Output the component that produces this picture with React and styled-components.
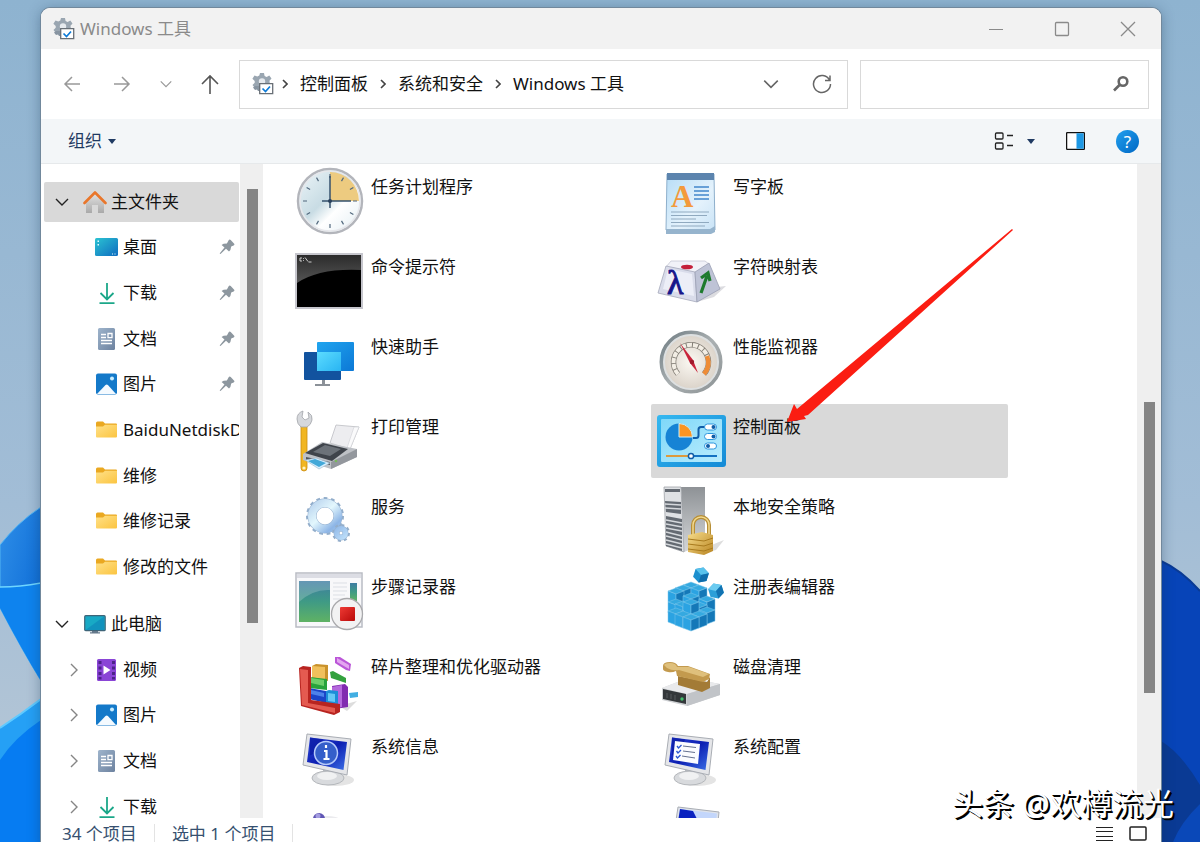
import React from "react";
import styled, { createGlobalStyle } from "styled-components";

const GlobalStyle = createGlobalStyle`
  * {
    box-sizing: border-box;
  }

  body {
    margin: 0;
    overflow: hidden;
    font-family: "Noto Sans", "Noto Sans CJK SC", sans-serif;
    font-size: 17px;
    line-height: 24px;
    color: #111;
  }

  button,
  input {
    font: inherit;
    color: inherit;
    border: 0;
    padding: 0;
    background: none;
  }

  a {
    color: inherit;
    text-decoration: none;
  }

  svg {
    display: block;
    flex: none;
  }
`;

/* ---------- shell ---------- */

const Desktop = styled.div`
  position: relative;
  height: 100vh;
  overflow: hidden;
  padding: 8px 39px 0 41px;
  background: linear-gradient(#8eb3d0, #a2bdd6 60%, #b9c8d6);
`;

const Wallpaper = styled.svg`
  position: absolute;
  bottom: 0;
  ${(props) => (props.$side === "left" ? "left: 0;" : "right: 0;")}
`;

const Window = styled.div`
  position: relative;
  height: 100vh;
  display: flex;
  flex-direction: column;
  overflow: hidden;
  background: #fff;
  border-radius: 9px 9px 0 0;
  box-shadow: 0 0 0 1px #71889c, 0 2px 14px rgba(20, 50, 80, 0.4);
`;

const TitleBar = styled.header`
  flex: none;
  height: 41px;
  display: flex;
  align-items: center;
  padding-left: 12px;
  background: #f2f2f2;
  color: #8a8a8a;
`;

const Title = styled.h1`
  flex: 1;
  margin: 0 0 0 5px;
  font-size: 17px;
  font-weight: 400;
`;

const CaptionButton = styled.button`
  width: 66px;
  height: 40px;
  display: grid;
  place-items: center;
`;

const AddressRow = styled.div`
  flex: none;
  height: 70px;
  display: flex;
  align-items: center;
  padding: 0 12px 0 18px;
  gap: 12px;
`;

const History = styled.div`
  display: flex;
  flex: none;
  width: 168px;
  gap: 24px;
`;

const IconButton = styled.button`
  width: ${(props) => props.$width || 26}px;
  height: 26px;
  display: grid;
  place-items: center;
  color: ${(props) => props.$color || "#666"};
`;

const AddressBox = styled.div`
  flex: 1;
  height: 49px;
  display: flex;
  align-items: center;
  padding: 0 12px;
  border: 1px solid #d9d9d9;
`;

const Crumbs = styled.nav`
  flex: 1;
  display: flex;
  align-items: center;
  margin-left: 8px;
  gap: 12px;
`;

const AddressActions = styled.div`
  display: flex;
  gap: 25px;
`;

const SearchBox = styled.label`
  width: 289px;
  height: 49px;
  display: flex;
  align-items: center;
  padding: 0 18px;
  border: 1px solid #d9d9d9;

  input {
    flex: 1;
    min-width: 0;
    outline: none;
  }
`;

const Toolbar = styled.div`
  flex: none;
  height: 45px;
  display: flex;
  align-items: center;
  justify-content: space-between;
  padding: 0 22px 0 27px;
  background: #f3f6f8;
  border-bottom: 1px solid #e6e9eb;
`;

const OrganizeButton = styled.button`
  display: flex;
  align-items: center;
  gap: 6px;
  color: #1f3a62;
`;

const ToolGroup = styled.div`
  display: flex;
  align-items: center;
  gap: 30px;
`;

const ViewButton = styled.button`
  display: flex;
  align-items: center;
  gap: 13px;
`;

const HelpButton = styled.button`
  width: 23px;
  height: 23px;
  border-radius: 50%;
  background: linear-gradient(135deg, #22a0ee, #0067c4);
  color: #fff;
  line-height: 23px;
  text-align: center;
`;

const Body = styled.div`
  flex: 1;
  min-height: 0;
  display: flex;
`;

/* ---------- navigation pane ---------- */

const Sidebar = styled.nav`
  flex: none;
  width: 199px;
  padding: 15px 1px 0 3px;
  overflow: hidden;
`;

const NavGroup = styled.ul`
  list-style: none;
  margin: 0 0 11px;
  padding: 0;
  height: ${(props) => props.$height}px;
  display: grid;
  grid-template-columns: minmax(0, 1fr);
  grid-auto-rows: 1fr;
  align-items: center;
`;

const NavButton = styled.button`
  width: 100%;
  height: 40px;
  display: flex;
  align-items: center;
  padding: 0 4px 0 ${(props) => (props.$root ? 10 : 22)}px;
  border-radius: 2px;
  background: ${(props) => (props.$selected ? "#d9d9d9" : "transparent")};
  overflow: hidden;
  white-space: nowrap;
`;

const Twisty = styled.span`
  flex: none;
  width: 16px;
  margin-right: 13px;
  color: ${(props) => (props.$open ? "#222" : "#858585")};
`;

const NavLabel = styled.span`
  flex: 1;
  margin-left: 4px;
  text-align: left;
`;

const Track = styled.div`
  flex: none;
  width: ${(props) => (props.$wide ? 24 : 23)}px;
  padding: ${(props) => props.$top}px 0 0 7px;
  background: #efefef;
`;

const Thumb = styled.div`
  width: 11px;
  height: ${(props) => props.$length};
  background: #858585;
`;

/* ---------- item view ---------- */

const Items = styled.main`
  flex: 1;
  min-width: 0;
  overflow: hidden;
  display: grid;
  grid-template-columns: repeat(auto-fill, 357px);
  grid-auto-rows: 74px;
  gap: 6px 5px;
  margin-left: 4px;
  padding-left: 22px;
`;

const Tile = styled.button`
  display: flex;
  align-items: flex-start;
  gap: 6px;
  padding-left: 4px;
  border-radius: 2px;
  background: ${(props) => (props.$selected ? "#d9d9d9" : "transparent")};
`;

const TileLabel = styled.span`
  padding-top: 11px;
`;

/* ---------- status bar ---------- */

const StatusBar = styled.footer`
  flex: none;
  height: 32px;
  display: flex;
  align-items: center;
  padding: 0 14px 0 21px;
  gap: 17px;
  color: #36506f;
`;

const StatusText = styled.span`
  padding-right: 17px;
  line-height: 20px;
  border-right: 1px solid #e3e3e3;
`;

const StatusViews = styled.div`
  display: flex;
  gap: 14px;
  margin-left: auto;
`;

/* ---------- overlays ---------- */

const Pointer = styled.svg`
  position: absolute;
  left: 786px;
  top: 228px;
  pointer-events: none;
`;

const Credit = styled.div`
  position: absolute;
  right: 26px;
  bottom: 19px;
  font-size: 31px;
  line-height: 40px;
  color: #fff;
  text-shadow: 1px 1px 0 #000, 2px 2px 0 #000;
  white-space: nowrap;
`;

/* ---------- small icons ---------- */

const Chevron = ({ dir = "down", size = 16 }) => (
  <svg width={size} height={size} viewBox="0 0 16 16" fill="none" stroke="currentColor" strokeWidth="1.4">
    <path d={dir === "down" ? "M2 5l6 6 6-6" : "M5 2l6 6-6 6"} />
  </svg>
);

const Caret = () => (
  <svg width="8" height="5" viewBox="0 0 8 5" fill="#1f3a62">
    <path d="M0 0h8L4 5z" />
  </svg>
);

const CrumbArrow = () => (
  <svg width="6" height="10" viewBox="0 0 6 10" fill="none" stroke="#444" strokeWidth="1.6">
    <path d="M1 1l4 4-4 4" />
  </svg>
);

const ToolsIcon = () => (
  <svg width="22" height="22" viewBox="0 0 22 22">
    <path
      d="M8 0h4l.6 3 2 1 2.700-1.500 2.200 3-2 2.300.2 2 2 1.500-1.400 3.500H2.700L.5 12l2.200-2.300V8L.4 5.700 2.500 2.500l2.800 1 2-1z"
      fill="#9aa6b1"
    />
    <circle cx="10" cy="8.500" r="3.200" fill="#e6eaee" />
    <path d="M3 13h5v5H6l-1-1.500-2 .5-2-2.500z" fill="#8794a1" />
    <path d="M7.700 10.700h13v10h-13z" fill="#fff" stroke="#686f76" strokeWidth="1.300" />
    <path d="M10.500 15.500l3 3 4.500-5" fill="none" stroke="#0c7bd8" strokeWidth="1.700" />
  </svg>
);

const HomeIcon = () => (
  <svg width="24" height="24" viewBox="0 0 24 24">
    <defs>
      <linearGradient id="wall" x2="0" y2="1">
        <stop stopColor="#e6e6e6" />
        <stop offset="1" stopColor="#a9a9a9" />
      </linearGradient>
    </defs>
    <path d="M3 11l9-9 9 9v12h-6v-8H9v8H3z" fill="url(#wall)" />
    <path d="M1.500 13L12 2.500 22.500 13" fill="none" stroke="#e9762b" strokeWidth="2.600" strokeLinejoin="round" strokeLinecap="round" />
  </svg>
);

const DesktopIcon = () => (
  <svg width="24" height="24" viewBox="0 0 24 24">
    <defs>
      <linearGradient id="desk" x2="1" y2="1">
        <stop stopColor="#2bc3d2" />
        <stop offset="1" stopColor="#0f6cc0" />
      </linearGradient>
    </defs>
    <rect x="0" y="3" width="23" height="18" rx="1.500" fill="url(#desk)" />
    <path d="M2.500 5.500h1.500v1.500H2.500zM2.500 9h1.500v1.500H2.500zM17 18.500h1v1h-1zM19.500 18.500h1v1h-1z" fill="#dffaff" />
  </svg>
);

const DownloadIcon = () => (
  <svg width="24" height="24" viewBox="0 0 24 24" fill="none" stroke="#1ba789" strokeWidth="1.800">
    <path d="M12 2v16M5.500 12l6.500 6.500 6.500-6.500" />
    <path d="M4.500 22.200h15" />
  </svg>
);

const DocumentIcon = () => (
  <svg width="24" height="24" viewBox="0 0 24 24">
    <defs>
      <linearGradient id="doc" x2="1" y2="1">
        <stop stopColor="#9eb4cc" />
        <stop offset="1" stopColor="#6d829f" />
      </linearGradient>
    </defs>
    <rect x="3" y="1" width="17" height="22" rx="1.500" fill="url(#doc)" />
    <path d="M6 7.500h5M6 10.500h5M6 13.500h11M6 16.500h11M13 6.500h4v4.200h-4z" stroke="#fff" strokeWidth="1.300" fill="none" />
  </svg>
);

const PictureIcon = () => (
  <svg width="24" height="24" viewBox="0 0 24 24">
    <rect x="1" y="1.500" width="21" height="21" rx="2" fill="#1479c9" />
    <path d="M2 22l8.500-9q1.200-1 2.400 0L21 22z" fill="#f4faff" />
    <circle cx="17" cy="6.500" r="2" fill="#c8eeff" />
  </svg>
);

const FolderIcon = () => (
  <svg width="24" height="24" viewBox="0 0 24 24">
    <defs>
      <linearGradient id="fold" x2="1" y2="1">
        <stop stopColor="#ffe189" />
        <stop offset="1" stopColor="#fbc440" />
      </linearGradient>
    </defs>
    <path d="M1 5q0-1.500 1.500-1.500h5.500l2 2h11q1 0 1 1V12H1z" fill="#eaa821" />
    <path d="M1 8.500h7l2-1.800h12v11.800q0 1-1 1H2q-1 0-1-1z" fill="url(#fold)" />
  </svg>
);

const ComputerIcon = () => (
  <svg width="24" height="24" viewBox="0 0 24 24">
    <rect x="1.700" y="3.700" width="20.500" height="15" rx="1" fill="#18a9c5" stroke="#3e6579" strokeWidth="1.200" />
    <path d="M2.500 18L21 4.500V18z" fill="#0d83b7" opacity=".6" />
    <path d="M9 19h6v1.500H9zM7 20.200h10v1.300H7z" fill="#64788a" />
  </svg>
);

const VideoIcon = () => (
  <svg width="24" height="24" viewBox="0 0 24 24">
    <rect x="2" y="1" width="19" height="22" rx="1.500" fill="#8a45d6" />
    <path d="M3.500 3h3v3h-3zm0 5.500h3v3h-3zm0 5.500h3v3h-3zm0 5h3v2.500h-3zM17 3h3v3h-3zm0 5.500h3v3h-3zm0 5.500h3v3h-3zm0 5h3v2.500h-3z" fill="#4d2389" />
    <path d="M8.500 7.500l7 4.500-7 4.500z" fill="#fff" />
  </svg>
);

const PinIcon = () => (
  <svg width="16" height="16" viewBox="0 0 16 16" fill="#8d979f">
    <path d="M9.500 1.500q1-1.500 2.200-.5l3.500 3.700q.8 1-.6 1.800l-2.400 1q-.3 3.500-2.200 5L7 9.800 1.500 15 .6 14.600 5.500 8.500 2.600 6Q4 4.600 7.900 4.600z" />
  </svg>
);

/* ---------- large icons, 72 x 74 ---------- */

const ClockArt = () => (
  <>
    <defs>
      <linearGradient id="dial" x2="1" y2="1">
        <stop stopColor="#eef6f9" />
        <stop offset=".45" stopColor="#c8dce4" />
        <stop offset=".62" stopColor="#fff" />
        <stop offset="1" stopColor="#e1edf2" />
      </linearGradient>
    </defs>
    <circle cx="37" cy="37" r="32" fill="url(#dial)" stroke="#b3b5bb" strokeWidth="2.500" />
    <circle cx="37" cy="37" r="30" fill="none" stroke="#e6e7eb" strokeWidth="1.500" />
    <path d="M37 37V8a29 29 0 0 1 29 29z" fill="#edcb80" />
    <g stroke="#50677c" strokeWidth="1.200">
      {[0, 30, 60, 90, 120, 150, 180, 210, 240, 270, 300, 330].map((a) => (
        <path key={a} d="M37 10v4" transform={`rotate(${a} 37 37)`} />
      ))}
    </g>
    <path d="M37 12v32M29 37h29" stroke="#35516d" strokeWidth="1.500" />
    <circle cx="37" cy="37" r="2" fill="#28405c" />
  </>
);

const ConsoleArt = () => (
  <>
    <defs>
      <linearGradient id="gloss" x2="0" y2="1">
        <stop stopColor="#2b2b2b" />
        <stop offset="1" stopColor="#555" />
      </linearGradient>
    </defs>
    <rect x="3" y="10" width="66" height="54" fill="#000" stroke="#c6c6cd" strokeWidth="2" />
    <path d="M4 11h64v15Q26 24 4 39z" fill="url(#gloss)" />
    <path d="M9 14h-2v3h2M10.500 14v.8M10.500 16v.8M12 13.500l3 4M15.500 18h3" stroke="#ddd" fill="none" strokeWidth=".9" />
  </>
);

const AssistArt = () => (
  <>
    <defs>
      <linearGradient id="qa" x2="1" y2="1">
        <stop stopColor="#20a5ef" />
        <stop offset="1" stopColor="#0c78d6" />
      </linearGradient>
      <linearGradient id="qb" x2="1" y2="1">
        <stop stopColor="#5cdcff" />
        <stop offset="1" stopColor="#29b4f2" />
      </linearGradient>
    </defs>
    <rect x="24" y="18" width="37" height="29" rx="1" fill="url(#qa)" />
    <path d="M29 55v5h-7v2h15v-2h-5v-5z" fill="#8b9198" />
    <rect x="11" y="28" width="37" height="28" rx="1" fill="#12539f" />
    <path d="M24 28h24v19H24z" fill="url(#qb)" />
  </>
);

const PrinterArt = () => (
  <>
    <path d="M8 20h6v44a3 3 0 0 1-6 0z" fill="#f1b622" stroke="#cb8d10" strokeWidth=".8" />
    <circle cx="11" cy="64" r="1.600" fill="#fff3c4" />
    <path d="M8 23q-4-3-4-8 0-6 6-8l-1 6 3 3 4-2-1-6q5 3 4 8-1 5-5 7z" fill="#d6d8dc" stroke="#a2a5aa" strokeWidth=".8" />
    <path d="M43 21l23 2-9 22-20-6z" fill="#ededf0" stroke="#bdbec3" strokeWidth=".8" />
    <path d="M61 23l5 0-9 22-3-1z" fill="#fafafb" stroke="#cfd0d5" strokeWidth=".6" />
    <path d="M10 50l19-12 35 7v8L38 65l-28-9z" fill="#bec1c6" />
    <path d="M38 58l26-13v8L38 65z" fill="#93979d" />
    <path d="M12 49l18-10 25 6-16 12z" fill="#3f444b" />
    <path d="M20 48l12-7 16 4-11 7z" fill="#6c7279" />
    <path d="M13 53l24 5v3l-24-5z" fill="#4e535a" />
    <path d="M12 56l11-2 14 5-11 6z" fill="#d6efff" stroke="#9eb6c8" strokeWidth=".6" />
    <path d="M15 57l7-2 11 4-7 4z" fill="#43a8d8" />
    <circle cx="43" cy="57" r="1.300" fill="#79b85c" />
  </>
);

// A gear as a dashed ring laid over a solid one
const Gear = ({ cx, cy, r, width, teeth }) => {
  const dash = (Math.PI * 2 * r) / (teeth * 2);
  return (
    <g fill="none">
      <circle cx={cx} cy={cy} r={r} stroke="#93aecb" strokeWidth="4" strokeDasharray={dash} />
      <circle cx={cx} cy={cy} r={r - width / 2} stroke="#93aecd" strokeWidth={width + 1} />
      <circle cx={cx} cy={cy} r={r - width / 2} stroke="url(#gear)" strokeWidth={width} />
    </g>
  );
};

const GearsArt = () => (
  <>
    <defs>
      <linearGradient id="gear" gradientUnits="userSpaceOnUse" x1="18" y1="18" x2="52" y2="56">
        <stop stopColor="#b9d3ee" />
        <stop offset=".35" stopColor="#e3f7fd" />
        <stop offset=".65" stopColor="#8db5e6" />
        <stop offset="1" stopColor="#bfe0fa" />
      </linearGradient>
    </defs>
    <Gear cx={32} cy={32} r={17} width={8} teeth={15} />
    <Gear cx={48} cy={49} r={7} width={5} teeth={8} />
  </>
);

const RecorderArt = () => (
  <>
    <defs>
      <linearGradient id="rec" x2="0" y2="1">
        <stop stopColor="#3e7ca2" />
        <stop offset=".5" stopColor="#3f9a85" />
        <stop offset="1" stopColor="#5fb264" />
      </linearGradient>
      <linearGradient id="stop" x2="1" y2="1">
        <stop stopColor="#ee3a34" />
        <stop offset="1" stopColor="#b90a0a" />
      </linearGradient>
    </defs>
    <rect x="3" y="9" width="66" height="54" fill="#f8f8fa" stroke="#b9bcc4" strokeWidth="1.500" />
    <path d="M4 10h64v4H4z" fill="#dcdde4" />
    <rect x="6" y="17" width="31" height="41" fill="url(#rec)" />
    <path d="M6 17h31v9Q20 25 6 38z" fill="#fff" opacity=".2" />
    <path d="M40 19h14M40 23h14M40 27h14M40 31h12M40 35h10" stroke="#dcdfe5" />
    <path d="M57 19h7v18h-7z" fill="url(#rec)" />
    <circle cx="54" cy="50" r="15.500" fill="#f2f2f3" stroke="#a9a9ac" strokeWidth="1.300" />
    <rect x="47" y="43" width="15" height="14" rx="1" fill="url(#stop)" />
  </>
);

const DefragArt = () => (
  <>
    <path d="M46 62l18-5-10 10z" fill="#ddd" />
    <path d="M42 13l5 0 11 7-1 7-4-1-11-7z" fill="#bb56d8" />
    <path d="M44 14l12 7v4l-12-7z" fill="#e3a5f0" />
    <path d="M37 28l3-1 13 7v5L38 34z" fill="#34a13f" />
    <path d="M39 42l13-2 3 3v20l-13 2z" fill="#812bb0" />
    <path d="M39 43l10-2v22l-9 2z" fill="#b468dc" />
    <path d="M19 22l4-2 12 1v16l-16-3z" fill="#c9922b" />
    <path d="M19 22l13 1v13l-13-3z" fill="#f0c05c" />
    <path d="M16 33l18 2v11l-18-2z" fill="#29a33c" />
    <path d="M18 34l13 2v6l-13-3z" fill="#6fce6a" />
    <path d="M16 44l17 3v12l-17-4z" fill="#1b45c8" />
    <path d="M18 46l13 3v4l-13-3z" fill="#4c82ea" />
    <path d="M33 47l3-1 9 1v13l-12-1z" fill="#1d8ed8" />
    <path d="M35 49l7 1v8l-7-1z" fill="#67c9f6" />
    <path d="M56 49l9-1v5l-8 1z" fill="#42aee2" />
    <path d="M6 24l4-2 8 1v33l29 4v8l-6 3L8 62z" fill="#b82420" />
    <path d="M7 25l8 1v33l27 5v5L9 61z" fill="#e45a50" />
  </>
);

const MonitorArt = ({ kind }) => (
  <>
    <defs>
      <linearGradient id="scr" x2="1" y2="1">
        <stop stopColor="#2d45d8" />
        <stop offset=".5" stopColor="#0c1fb2" />
        <stop offset="1" stopColor="#3c6fe6" />
      </linearGradient>
    </defs>
    <ellipse cx="42" cy="56" rx="19" ry="6" fill="#e4e4e4" />
    <path d="M30 44l12 3v8H30z" fill="#b8bbc0" />
    <ellipse cx="35" cy="54" rx="16" ry="7" fill="#d8dadd" stroke="#b4b7bb" />
    <ellipse cx="34" cy="52" rx="10" ry="4" fill="#f0f1f2" />
    <path d="M14 10l44 5-4 36-44-10z" fill="#e5e6e9" stroke="#a9adb4" />
    <path d="M17 13.500l37 4.500-3.500 28L14 38z" fill="url(#scr)" />
    <path d="M17 13.500l13 2-5 12-8 4z" fill="#0818a0" opacity=".7" />
    {kind === "info" && (
      <>
        <circle cx="33" cy="29" r="11.500" fill="#355fca" stroke="#b6cafa" strokeWidth="1.500" />
        <path d="M33 24v-3M31 27h2.500v8M30.500 35h6" stroke="#fff" strokeWidth="2.200" fill="none" />
      </>
    )}
    {kind === "list" && (
      <>
        <path d="M20 17l25 3-2 20-25-4z" fill="#fbfcff" />
        <path d="M28 22l13 1.500M28 27l12 1.500M27 32l13 2" stroke="#65718f" />
        <path d="M22 22l1.500 2 3-3M21.500 27l1.500 2 3-3M21 32l1.500 2 3-3" stroke="#2a55d0" strokeWidth="1.300" fill="none" />
      </>
    )}
  </>
);

const WordpadArt = () => (
  <>
    <defs>
      <linearGradient id="pad" x2="1" y2="1">
        <stop stopColor="#b5dcf6" />
        <stop offset=".6" stopColor="#e4f2fc" />
        <stop offset="1" stopColor="#c9e3f6" />
      </linearGradient>
    </defs>
    <path d="M12 10h47l1 56H11z" fill="url(#pad)" stroke="#8fb0cc" />
    <path d="M12 9h47v7H12z" fill="#5c84ae" />
    <path d="M11 65h44l5-3v6l-4 2H11z" fill="#96b4cd" />
    <text x="16" y="43" fontFamily="Liberation Serif, serif" fontWeight="700" fontSize="31" fill="#f39a3c">
      A
    </text>
    <path d="M39 23h15M39 27h15M39 31h15M39 35h15" stroke="#4187cb" strokeWidth="1.600" />
    <path d="M16 48h38M16 51.500h36M16 55h25M16 58.500h38M16 62h34" stroke="#8fa9bf" strokeWidth="1.200" />
  </>
);

const CharmapArt = () => (
  <>
    <path d="M62 43l9-1-12 11-17 5z" fill="#dcdce0" />
    <path d="M16 17h34l4 3-14 9-29-6z" fill="#f1f2f8" stroke="#c6c8d4" strokeWidth=".8" />
    <path d="M11 22l29 6 2 30-39-9z" fill="#d9dcea" stroke="#a4a8ba" strokeWidth=".8" />
    <path d="M54 19l11 26-23 13-2-30z" fill="#bec3d6" stroke="#9a9fb4" strokeWidth=".8" />
    <path d="M13 25l24 5 2 22-31-7z" fill="#eceef7" />
    <ellipse cx="32" cy="23" rx="6" ry="2.300" fill="#c4213a" />
    <text x="12" y="50" fontFamily="Liberation Serif, serif" fontSize="34" fill="#16168a" stroke="#16168a">
      λ
    </text>
    <path d="M46 49l6-17M46 34l7-5 2 8" stroke="#1d7a2d" strokeWidth="3.200" fill="none" />
  </>
);

const GaugeArt = () => (
  <>
    <defs>
      <radialGradient id="gg">
        <stop stopColor="#fbf8f2" />
        <stop offset="1" stopColor="#d8d0c6" />
      </radialGradient>
      <linearGradient id="rim" x2="1" y2="1">
        <stop stopColor="#6f7c82" />
        <stop offset=".5" stopColor="#aab0b2" />
        <stop offset="1" stopColor="#8c9294" />
      </linearGradient>
    </defs>
    <circle cx="36" cy="38" r="29.500" fill="url(#gg)" stroke="url(#rim)" strokeWidth="4" />
    <circle cx="36" cy="38" r="27" fill="none" stroke="#dde0e1" strokeWidth="2" />
    <path d="M23 50a17.500 17.500 0 1 1 26 0" fill="none" stroke="#858078" strokeWidth="5.500" />
    <path d="M23 50a17.500 17.500 0 1 1 26 0" fill="none" stroke="#f3eee5" strokeWidth="4" strokeDasharray="5 1" />
    <path d="M52 32a17.500 17.500 0 0 1-3 18" fill="none" stroke="#ee8c36" strokeWidth="4.500" />
    <path d="M25 19l13 17 5 13-8-10z" fill="#c8243b" />
    <circle cx="37" cy="38" r="2.200" fill="#9f1a2c" />
  </>
);

const ControlArt = () => (
  <>
    <defs>
      <linearGradient id="cp" x2="1" y2="1">
        <stop stopColor="#35b8f0" />
        <stop offset="1" stopColor="#148ad6" />
      </linearGradient>
      <linearGradient id="cpi" x2="1" y2="1">
        <stop stopColor="#7fd8f9" />
        <stop offset="1" stopColor="#b9ecfd" />
      </linearGradient>
    </defs>
    <rect x="2" y="11" width="69" height="52" rx="3" fill="url(#cp)" />
    <rect x="6" y="15" width="61" height="43" rx="1" fill="url(#cpi)" />
    <circle cx="24" cy="33" r="13.500" fill="#1683d5" />
    <path d="M24 33V19.500A13.500 13.500 0 0 1 37.500 33z" fill="#fb9421" stroke="#c9f1fe" strokeWidth="1" />
    <path d="M38 34h3q2.500 0 2.500-2.500v-6q0-2.500 2.500-2.500h4" fill="none" stroke="#0f5da8" strokeWidth="2" />
    {[23, 32.500, 42].map((y, i) => (
      <g key={y}>
        <rect x="49.500" y={y - 3} width="12" height="6" rx="3" fill="#fff" stroke="#2d96de" />
        <circle cx={i === 2 ? 53 : 58.500} cy={y} r="2" fill="#0f5da8" />
      </g>
    ))}
    <path d="M11 52h22" stroke="#dd9a3c" strokeWidth="2" />
    <path d="M39 52h23" stroke="#1572c2" strokeWidth="2" />
    <circle cx="36" cy="52" r="2.600" fill="#fff" stroke="#0f5da8" strokeWidth="1.500" />
  </>
);

const SecurityArt = () => (
  <>
    <defs>
      <linearGradient id="side" x2="0" y2="1">
        <stop stopColor="#8e9296" />
        <stop offset="1" stopColor="#d5d7d9" />
      </linearGradient>
      <linearGradient id="gold" x2="1" y2="1">
        <stop stopColor="#f7dd8b" />
        <stop offset="1" stopColor="#b98522" />
      </linearGradient>
    </defs>
    <path d="M54 62l15-6-8 10-14 4z" fill="#ddd" />
    <path d="M26 3h24v57l-21 8z" fill="url(#side)" />
    <path d="M9 3h17l3 65-18-6z" fill="#dfe1e4" stroke="#9ea2a7" strokeWidth=".8" />
    <path d="M10 5h15v3H10zM10 17l16 1v12l-15-2zM11 32l16 3v32l-16-5z" fill="#646a72" />
    <path d="M10 20l16 1M10 24l16 1M11 36l16 3M11 40l16 3M11 44l16 3M11 48l16 4M11 52l16 4M11 56l16 4M11 60l16 4" stroke="#d5d8dc" strokeWidth="1.300" />
    <path d="M38 52V41a8 8 0 0 1 16 0v11" fill="none" stroke="#b78e35" strokeWidth="4" />
    <path d="M38 52V41a8 8 0 0 1 16 0v11" fill="none" stroke="#f2d98e" strokeWidth="1.500" />
    <path d="M33 51l14-3 11 3v16l-9 4-16-3z" fill="url(#gold)" />
    <path d="M33 55l16 2 9-3M33 60l16 2 9-3M33 65l16 2 9-3" stroke="#a87a1d" fill="none" />
  </>
);

// Isometric cube; x, y is the near top corner
const Cube = ({ x, y }) => (
  <g transform={`translate(${x} ${y})`} stroke="#7cc6ea" strokeWidth=".5">
    <path d="M0 0l-8-3 8-3 8 3z" fill="#35a9e0" />
    <path d="M0 0l-8-3v11l8 3z" fill="#2ba3e2" />
    <path d="M0 0l8-3v11l-8 3z" fill="#1478b8" />
  </g>
);

const RegistryArt = () => (
  <>
    {[
      [36, 24], [28, 27], [44, 27], [21, 30], [36, 35], [52, 38],
      [21, 41], [28, 43], [44, 44], [36, 41],
      [21, 50], [52, 49], [28, 53], [44, 53], [36, 56],
    ].map(([x, y]) => (
      <Cube key={`${x}-${y}`} x={x} y={y} />
    ))}
    <g transform="rotate(18 46 11)">
      <path d="M46 3l7 4v8l-7 4-7-4V7z" fill="#1c8fce" />
      <path d="M46 3l7 4-7 4-7-4z" fill="#58c2ec" />
      <path d="M46 11l7-4v8l-7 4z" fill="#0f6dab" />
    </g>
    <g transform="rotate(-18 61 27)">
      <path d="M61 19l7 4v8l-7 4-7-4v-8z" fill="#2b9fd8" />
      <path d="M61 19l7 4-7 4-7-4z" fill="#6bcbf0" />
      <path d="M61 27l7-4v8l-7 4z" fill="#1273b2" />
    </g>
  </>
);

const CleanupArt = () => (
  <>
    <path d="M7 44l26-10 32 6v11L32 62 7 56z" fill="#cfd1d4" />
    <path d="M7 44l26-10 32 6-33 10z" fill="#e9eaec" />
    <path d="M32 50l33-10v11L32 62z" fill="#c1c4c8" />
    <path d="M8 45l23 5v10L8 55z" fill="#34383b" />
    <path d="M12 49v5M16 50v5M20 51v5" stroke="#565b5f" />
    <circle cx="27" cy="55" r="1.700" fill="#43c06c" />
    <path d="M23 32l29 6 3-5v11l-8 4-24-7z" fill="#a37b36" />
    <path d="M8 22q0-4 7-4 6 0 8 4l10 0 22 8-1 5-6 3-26-6-1-5q-4 2-8 1-5-1-5-3z" fill="#c39a4e" />
    <path d="M9 21q1-2 6-2 6 0 7 4l12 0 20 7-6 3-24-7q-7 1-12-2z" fill="#dfc07c" />
  </>
);

const ServicesArt = () => (
  <>
    <ellipse cx="34" cy="15" rx="12" ry="3" fill="#ebebee" />
    <circle cx="26" cy="15" r="6" fill="#5f55b4" />
    <circle cx="25" cy="12" r="2.500" fill="#a49de0" />
  </>
);

const RemoteArt = () => (
  <>
    <path d="M23 3l41 5-3 30-42-8z" fill="#dfe3ea" stroke="#a9adb4" />
    <path d="M25 5l37 4.500-3 26-37-8z" fill="#c3d6fb" />
    <path d="M25 5l13 2 4 8-6 12-14-3z" fill="#0a22c0" />
  </>
);

/* ---------- data ---------- */

const favourites = [
  { label: "桌面", icon: DesktopIcon, pinned: true },
  { label: "下载", icon: DownloadIcon, pinned: true },
  { label: "文档", icon: DocumentIcon, pinned: true },
  { label: "图片", icon: PictureIcon, pinned: true },
  { label: "BaiduNetdiskDownload", icon: FolderIcon },
  { label: "维修", icon: FolderIcon },
  { label: "维修记录", icon: FolderIcon },
  { label: "修改的文件", icon: FolderIcon },
];

const computer = [
  { label: "视频", icon: VideoIcon },
  { label: "图片", icon: PictureIcon },
  { label: "文档", icon: DocumentIcon },
  { label: "下载", icon: DownloadIcon },
];

const tools = [
  { label: "任务计划程序", art: <ClockArt /> },
  { label: "写字板", art: <WordpadArt /> },
  { label: "命令提示符", art: <ConsoleArt /> },
  { label: "字符映射表", art: <CharmapArt /> },
  { label: "快速助手", art: <AssistArt /> },
  { label: "性能监视器", art: <GaugeArt /> },
  { label: "打印管理", art: <PrinterArt /> },
  { label: "控制面板", art: <ControlArt />, selected: true },
  { label: "服务", art: <GearsArt /> },
  { label: "本地安全策略", art: <SecurityArt /> },
  { label: "步骤记录器", art: <RecorderArt /> },
  { label: "注册表编辑器", art: <RegistryArt /> },
  { label: "碎片整理和优化驱动器", art: <DefragArt /> },
  { label: "磁盘清理", art: <CleanupArt /> },
  { label: "系统信息", art: <MonitorArt kind="info" /> },
  { label: "系统配置", art: <MonitorArt kind="list" /> },
  { label: "组件服务", art: <ServicesArt /> },
  { label: "远程桌面", art: <RemoteArt /> },
];

/* ---------- components ---------- */

const NavItem = ({ label, icon: Icon, root, open, expandable, pinned, selected }) => (
  <li>
    <NavButton $root={root} $selected={selected}>
      <Twisty $open={open}>{expandable && <Chevron dir={open ? "down" : "right"} />}</Twisty>
      <Icon />
      <NavLabel>{label}</NavLabel>
      {pinned && <PinIcon />}
    </NavButton>
  </li>
);

const NavigationPane = () => (
  <Sidebar aria-label="导航窗格">
    <NavGroup $height={411}>
      <NavItem label="主文件夹" icon={HomeIcon} root open expandable selected />
      {favourites.map((item) => (
        <NavItem key={item.label} {...item} />
      ))}
    </NavGroup>
    <NavGroup $height={229}>
      <NavItem label="此电脑" icon={ComputerIcon} root open expandable />
      {computer.map((item) => (
        <NavItem key={item.label} {...item} expandable />
      ))}
    </NavGroup>
  </Sidebar>
);

const CaptionButtons = () => (
  <>
    <CaptionButton aria-label="最小化">
      <svg width="16" height="16" stroke="#8a8a8a">
        <path d="M1 8.500h14" />
      </svg>
    </CaptionButton>
    <CaptionButton aria-label="最大化">
      <svg width="16" height="16" fill="none" stroke="#8a8a8a" strokeWidth="1.300">
        <rect x="1.500" y="1.500" width="13" height="13" rx="1" />
      </svg>
    </CaptionButton>
    <CaptionButton aria-label="关闭">
      <svg width="16" height="16" fill="none" stroke="#8a8a8a" strokeWidth="1.300">
        <path d="M1 1l14 14M15 1L1 15" />
      </svg>
    </CaptionButton>
  </>
);

const AddressBar = () => (
  <AddressRow>
    <History>
      <IconButton aria-label="后退" $color="#999">
        <svg width="18" height="18" viewBox="0 0 18 18" fill="none" stroke="currentColor" strokeWidth="1.500">
          <path d="M17 9H2M9 2L2 9l7 7" />
        </svg>
      </IconButton>
      <IconButton aria-label="前进" $color="#999">
        <svg width="18" height="18" viewBox="0 0 18 18" fill="none" stroke="currentColor" strokeWidth="1.500">
          <path d="M1 9h15M9 2l7 7-7 7" />
        </svg>
      </IconButton>
      <IconButton aria-label="最近的位置" $color="#999" $width={14}>
        <Chevron size={14} />
      </IconButton>
      <IconButton aria-label="上移" $color="#555">
        <svg width="20" height="20" viewBox="0 0 20 20" fill="none" stroke="currentColor" strokeWidth="1.600">
          <path d="M10 20V2M2 10l8-8 8 8" />
        </svg>
      </IconButton>
    </History>
    <AddressBox>
      <ToolsIcon />
      <Crumbs aria-label="地址">
        <CrumbArrow />
        <a href="#control">控制面板</a>
        <CrumbArrow />
        <a href="#system">系统和安全</a>
        <CrumbArrow />
        <a href="#tools">Windows 工具</a>
      </Crumbs>
      <AddressActions>
        <IconButton aria-label="展开">
          <Chevron size={18} />
        </IconButton>
        <IconButton aria-label="刷新">
          <svg width="20" height="20" viewBox="0 0 20 20" fill="none" stroke="currentColor" strokeWidth="1.500">
            <path d="M17.500 6A8.500 8.500 0 1 0 18.500 10M18 1.500v5h-5" />
          </svg>
        </IconButton>
      </AddressActions>
    </AddressBox>
    <SearchBox>
      <input type="text" aria-label="搜索" />
      <svg width="18" height="18" viewBox="0 0 18 18" fill="none" stroke="#666">
        <circle cx="11" cy="6.500" r="4.300" strokeWidth="2.600" />
        <path d="M8 9.500l-6 6" strokeWidth="2.600" />
      </svg>
    </SearchBox>
  </AddressRow>
);

const CommandBar = () => (
  <Toolbar>
    <OrganizeButton>
      组织
      <Caret />
    </OrganizeButton>
    <ToolGroup>
      <ViewButton aria-label="更改视图">
        <svg width="20" height="18" viewBox="0 0 20 18" fill="none" stroke="#222" strokeWidth="1.300">
          <rect x="1.500" y="1" width="7.500" height="6" rx="1" />
          <rect x="1.500" y="11" width="7.500" height="6" rx="1" />
          <path d="M13 3.500h6M13 13.500h6" />
        </svg>
        <Caret />
      </ViewButton>
      <IconButton aria-label="预览窗格" $width={21}>
        <svg width="19" height="18" viewBox="0 0 19 18">
          <rect x=".6" y=".6" width="17.800" height="16.800" rx="1" fill="#fff" stroke="#111" strokeWidth="1.300" />
          <path d="M10.500 1.300h7.200v15.400h-7.200z" fill="#1e98e4" />
        </svg>
      </IconButton>
      <HelpButton aria-label="帮助">?</HelpButton>
    </ToolGroup>
  </Toolbar>
);

const App = () => (
  <>
    <GlobalStyle />
    <Desktop>
      <Wallpaper $side="left" width="41" height="342" viewBox="0 0 41 342">
        <defs>
          <linearGradient id="petal" x2="1" y2="1">
            <stop stopColor="#2f8fe8" />
            <stop offset="1" stopColor="#0563d2" />
          </linearGradient>
        </defs>
        <path d="M0 45Q18 22 41 7V181Q22 150 0 108z" fill="url(#petal)" stroke="#52b6f4" />
        <path d="M0 87q20 0 41-4v98Q22 150 0 108z" fill="#0e83ee" />
        <path d="M0 87q20 0 41-4" fill="none" stroke="#6fd6ff" strokeWidth="1.500" />
        <path d="M0 228q20-13 41-29v143H0z" fill="#25a0f5" />
        <path d="M0 228q20-13 41-29" fill="none" stroke="#5fcaff" strokeWidth="2" />
        <path d="M0 260q14-22 41-40v122H0z" fill="#067cf2" />
      </Wallpaper>
      <Wallpaper $side="right" width="39" height="282" viewBox="0 0 39 282">
        <path d="M0 1q20 9 39 30v251H0z" fill="#0744b8" />
        <path d="M0 1q20 9 39 30" fill="none" stroke="#0a3a94" strokeWidth="2" />
        <path d="M0 181q20 12 39 44v57H0z" fill="#0a3a94" />
        <path d="M12 282q8-20 27-38v38z" fill="#0a48b8" />
      </Wallpaper>
      <Window>
        <TitleBar>
          <ToolsIcon />
          <Title>Windows 工具</Title>
          <CaptionButtons />
        </TitleBar>
        <AddressBar />
        <CommandBar />
        <Body>
          <NavigationPane />
          <Track $top={25}>
            <Thumb $length="69%" />
          </Track>
          <Items>
            {tools.map((tool) => (
              <Tile key={tool.label} $selected={tool.selected}>
                <svg width="72" height="74" viewBox="0 0 72 74">
                  {tool.art}
                </svg>
                <TileLabel>{tool.label}</TileLabel>
              </Tile>
            ))}
          </Items>
          <Track $wide $top={238}>
            <Thumb $length="70%" />
          </Track>
        </Body>
        <StatusBar>
          <StatusText>34 个项目</StatusText>
          <StatusText>选中 1 个项目</StatusText>
          <StatusViews>
            <IconButton aria-label="详细信息" $width={19}>
              <svg width="18" height="16" viewBox="0 0 18 16" stroke="#222">
                <path d="M0 1.500h17M0 5.500h17M0 10.500h17M0 14.500h17" />
              </svg>
            </IconButton>
            <IconButton aria-label="大图标" $width={19}>
              <svg width="18" height="16" viewBox="0 0 18 16" fill="none" stroke="#222" strokeWidth="1.500">
                <rect x="1" y="1" width="16" height="13" rx="1" />
              </svg>
            </IconButton>
          </StatusViews>
        </StatusBar>
      </Window>
      <Pointer width="230" height="196" viewBox="0 0 230 196" fill="#fb1d12">
        <path d="M1 194L8 176l3 5L226 1l1 1L22 187l-4 1 2 3z" />
      </Pointer>
      <Credit>头条 @欢樽流光</Credit>
    </Desktop>
  </>
);

export default App;
